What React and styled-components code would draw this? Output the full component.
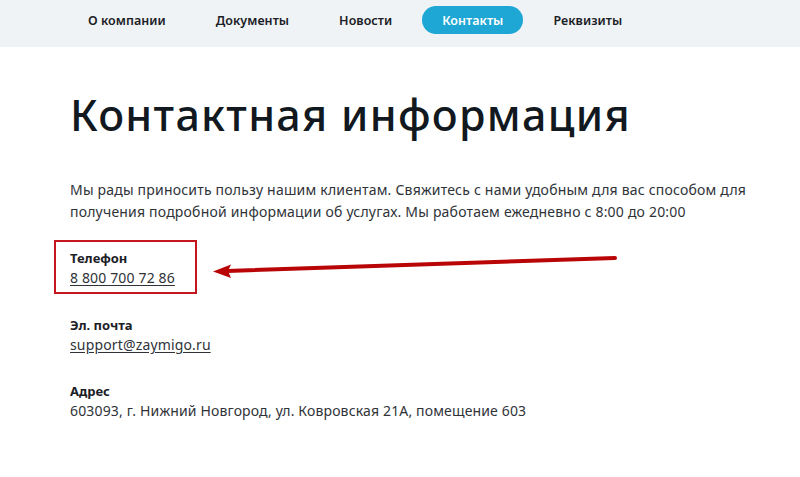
import React from "react";
import styled, { createGlobalStyle } from "styled-components";

const GlobalStyle = createGlobalStyle`
  html, body {
    margin: 0;
    padding: 0;
    background: #ffffff;
  }
  body {
    font-family: "Noto Sans", "Open Sans", sans-serif;
    color: #1b2026;
  }
`;

const Page = styled.div`
  position: relative;
  width: 800px;
  height: 477px;
  overflow: hidden;
  background: #ffffff;
`;

const Nav = styled.nav`
  display: flex;
  align-items: center;
  gap: 10px;
  height: 47px;
  box-sizing: border-box;
  padding: 0 0 7px 68px;
  background: #eff3f5;
`;

const NavItem = styled.a`
  display: flex;
  align-items: center;
  justify-content: center;
  height: 28px;
  padding: 0 20px;
  border-radius: 14px;
  font-size: 12.5px;
  font-weight: 600;
  letter-spacing: 0.05px;
  text-decoration: none;
  color: ${({ $active }) => ($active ? "#ffffff" : "#1b2026")};
  background: ${({ $active }) => ($active ? "#1ea6d4" : "transparent")};
`;

const Content = styled.main`
  padding: 0 0 0 70px;
`;

const Title = styled.h1`
  margin: 42px 0 0;
  font-size: 43px;
  font-weight: 500;
  line-height: 52px;
  letter-spacing: 1.3px;
  color: #111820;
`;

const Lead = styled.p`
  margin: 38px 0 0;
  width: 700px;
  font-size: 14px;
  line-height: 22px;
  letter-spacing: 0.2px;
  color: #2f3338;
`;

const Block = styled.div`
  display: inline-flex;
  flex-direction: column;
  box-sizing: border-box;
  margin: ${({ $gap }) => $gap}px 0 0 ${({ $framed }) => ($framed ? -16 : 0)}px;
  padding: ${({ $framed }) => ($framed ? "6px 20px 4px 14px" : "0")};
  border: ${({ $framed }) => ($framed ? "2px solid #c4161c" : "none")};
`;

const Label = styled.span`
  font-size: 13px;
  font-weight: 700;
  line-height: 20px;
  color: #1b2026;
`;

const Value = styled.a`
  font-size: 14px;
  line-height: 20px;
  letter-spacing: 0.15px;
  color: #2f3338;
  text-decoration: ${({ $link }) => ($link ? "underline" : "none")};
  text-underline-offset: 2px;
`;

const Stack = styled.div`
  display: flex;
  flex-direction: column;
  align-items: flex-start;
`;

const Pointer = styled.svg`
  position: absolute;
  left: 205px;
  top: 250px;
`;

const links = ["О компании", "Документы", "Новости", "Контакты", "Реквизиты"];

export default function App() {
  return (
    <Page>
      <GlobalStyle />
      <Nav>
        {links.map((l) => (
          <NavItem key={l} $active={l === "Контакты"}>
            {l}
          </NavItem>
        ))}
      </Nav>
      <Content>
        <Title>Контактная информация</Title>
        <Lead>
          Мы рады приносить пользу нашим клиентам. Свяжитесь с нами удобным для
          вас способом для получения подробной информации об услугах. Мы
          работаем ежедневно с 8:00 до 20:00
        </Lead>
        <Stack>
          <Block $framed $gap={17}>
            <Label>Телефон</Label>
            <Value $link>8 800 700 72 86</Value>
          </Block>
          <Block $gap={21}>
            <Label>Эл. почта</Label>
            <Value $link>support@zaymigo.ru</Value>
          </Block>
          <Block $gap={26}>
            <Label>Адрес</Label>
            <Value>603093, г. Нижний Новгород, ул. Ковровская 21А, помещение 603</Value>
          </Block>
        </Stack>
      </Content>
      <Pointer width="420" height="30" viewBox="0 0 420 30">
        <path d="M22 21 L410 8" stroke="#b90505" strokeWidth="4" strokeLinecap="round" />
        <path d="M8 21.5 L26 14.5 L23 21 L26 28 Z" fill="#b90505" />
      </Pointer>
    </Page>
  );
}
